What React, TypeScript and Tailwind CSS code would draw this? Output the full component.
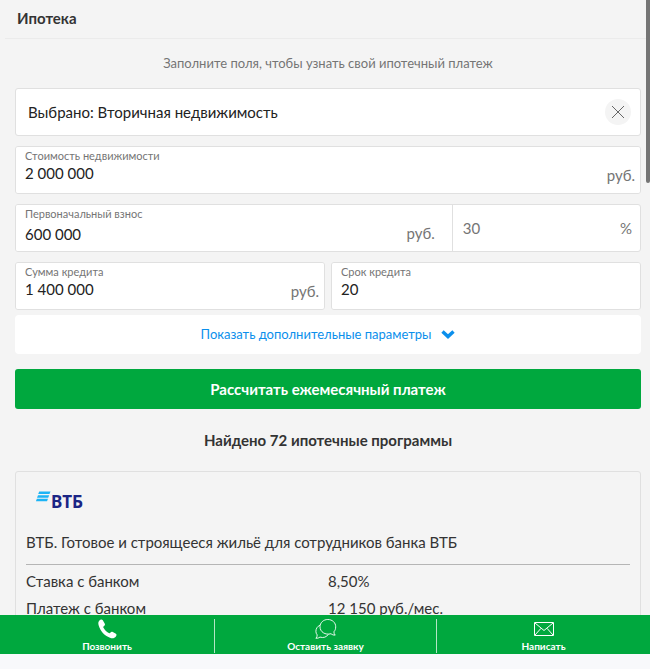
import type { ReactNode } from "react";
import { useState } from "react";

type FieldProps = {
  id: string;
  label: string;
  value: string;
  onChange: (value: string) => void;
  unit?: string;
  low?: boolean;
};

function Field({ id, label, value, onChange, unit, low }: FieldProps) {
  return (
    <div className="flex h-full min-w-0 flex-1 items-end bg-white">
      <div className="flex h-full min-w-0 flex-1 flex-col pl-[9px] pt-[2px]">
        <label htmlFor={id} className="text-[11px] leading-[14px] text-[#757575]">
          {label}
        </label>
        <input
          id={id}
          value={value}
          onChange={(e) => onChange(e.target.value)}
          className={`w-full bg-transparent text-[15px] leading-5 text-[#222] outline-none ${low ? "mt-[3px]" : ""}`}
        />
      </div>
      {unit && (
        <span className={`text-[15px] leading-5 text-[#757575] ${low ? "pb-2 pr-[17px]" : "pb-2 pr-[5px]"}`}>{unit}</span>
      )}
    </div>
  );
}

function Action({ href, label, children }: { href: string; label: string; children: ReactNode }) {
  return (
    <a href={href} className="flex flex-col items-center text-[10px] font-bold leading-[14px] text-white">
      <span className="flex h-5 items-center">{children}</span>
      {label}
    </a>
  );
}

const box = "h-12 overflow-hidden rounded-[3px] border border-[#e0e0e0] bg-white";

const program = [
  { name: "Ставка с банком", value: "8,50%" },
  { name: "Платеж с банком", value: "12 150 руб./мес." },
];

export default function App() {
  const [price, setPrice] = useState("2 000 000");
  const [deposit, setDeposit] = useState("600 000");
  const [percent, setPercent] = useState("30");
  const [amount, setAmount] = useState("1 400 000");
  const [term, setTerm] = useState("20");

  return (
    <div className="relative flex h-screen flex-col bg-[#f4f4f4] font-['Lato','Noto_Sans',sans-serif] text-[#333]">
      <div className="absolute right-0 top-0 h-[183px] w-1 rounded-b bg-[#757575]" />

      <main className="min-h-0 flex-1 overflow-hidden pl-[5px] pr-1">
        <h1 className="border-b border-[#ebebeb] pb-[9px] pl-3 pt-2 text-[15px] font-bold leading-[21px]">Ипотека</h1>

        <form className="pl-[10px] pr-[5px]" onSubmit={(e) => e.preventDefault()}>
          <p className="pb-[15px] pt-[14px] text-center text-[13px] leading-5 text-[#757575]">
            Заполните поля, чтобы узнать свой ипотечный платеж
          </p>

          <div className="flex flex-col gap-[10px]">
            <div className={`${box} flex items-center justify-between pl-3 pr-[9px] text-[15px] text-[#222]`}>
              <span>Выбрано: Вторичная недвижимость</span>
              <button type="button" aria-label="Сбросить" className="flex size-[26px] items-center justify-center rounded-full bg-[#f4f4f4]">
                <svg width="12" height="12" viewBox="0 0 12 12" stroke="#666" strokeWidth="1">
                  <path d="M0 0L12 12M12 0L0 12" />
                </svg>
              </button>
            </div>

            <div className={box}>
              <Field id="price" label="Стоимость недвижимости" value={price} onChange={setPrice} unit="руб." />
            </div>

            <div className={`${box} flex`}>
              <div className="flex w-[70%] border-r border-[#e0e0e0]">
                <Field id="deposit" label="Первоначальный взнос" value={deposit} onChange={setDeposit} unit="руб." low />
              </div>
              <div className="flex min-w-0 flex-1 items-center pl-[10px] pr-2 text-[15px] leading-5 text-[#757575]">
                <input
                  aria-label="Взнос в процентах"
                  value={percent}
                  onChange={(e) => setPercent(e.target.value)}
                  className="min-w-0 flex-1 bg-transparent outline-none"
                />
                <span>%</span>
              </div>
            </div>

            <div className="grid grid-cols-2 gap-[6px]">
              <div className={box}>
                <Field id="amount" label="Сумма кредита" value={amount} onChange={setAmount} unit="руб." />
              </div>
              <div className={box}>
                <Field id="term" label="Срок кредита" value={term} onChange={setTerm} />
              </div>
            </div>
          </div>

          <button type="button" className="mt-[5px] flex h-[39px] w-full items-center justify-center gap-[10px] rounded bg-white text-[13px] text-[#0b8fec]">
            Показать дополнительные параметры
            <svg width="14" height="9" viewBox="0 0 14 9" fill="none" stroke="#0b8fec" strokeWidth="3.4">
              <path d="M1.5 1.5L7 6.6L12.5 1.5" />
            </svg>
          </button>

          <button type="submit" className="mt-[15px] h-10 w-full rounded-[3px] bg-[#00a83e] text-[15px] font-bold text-white">
            Рассчитать ежемесячный платеж
          </button>
        </form>

        <section className="pl-[10px] pr-[5px]">
          <h2 className="pb-[21px] pt-[21px] text-center text-[15px] font-bold leading-5">Найдено 72 ипотечные программы</h2>

          <article className="rounded-[3px] border border-[#e0e0e0] px-[10px] pb-4 pt-[18px] text-[15px] leading-5">
            <svg className="ml-[10px]" width="50" height="22" viewBox="0 0 50 22" role="img" aria-label="ВТБ">
              <g fill="#1cb4f5">
                <path d="M3.2 1.5H14.5L13.5 4H2.2Z" />
                <path d="M2 5.2H13.2L12.2 7.7H1Z" />
                <path d="M.9 8.8H12L11 11.3H-.1Z" />
              </g>
              <text x="15" y="18" fill="#1b2585" fontFamily="'Noto Sans', sans-serif" fontSize="17" fontWeight="700">
                ВТБ
              </text>
            </svg>
            <h3 className="border-b border-[#b5b5b5] pb-3 pt-5">ВТБ. Готовое и строящееся жильё для сотрудников банка ВТБ</h3>
            <table className="mt-[2px] w-full table-fixed">
              <tbody>
                {program.map((row) => (
                  <tr key={row.name} className="h-[27px]">
                    <th scope="row" className="text-left font-normal">{row.name}</th>
                    <td>{row.value}</td>
                  </tr>
                ))}
              </tbody>
            </table>
          </article>
        </section>
      </main>

      <nav className="grid grid-cols-[215fr_222fr_213fr] divide-x divide-white/70 bg-[#00a83e] pb-px pt-1">
        <Action href="#call" label="Позвонить">
          <svg width="19" height="20" viewBox="0 0 19 20" fill="white">
            <path d="M1.2 1.7C2.2.6 3.9.1 4.8 1.2L6.8 4.7C7.3 5.7 6.8 6.4 5.7 7.2C5.1 7.7 5.2 8.2 5.5 8.8C6.6 11 8.4 12.9 10.8 14.1C11.4 14.4 11.8 14.3 12.3 13.7C13.1 12.6 13.8 12.4 14.8 12.9L17.9 14.7C18.8 15.3 18.6 16.5 17.9 17.4C16.6 19.2 14.4 19.7 12 18.7C6.3 16.4 2.4 12.1.7 6.4C.1 4.4.2 2.9 1.2 1.7Z" />
          </svg>
        </Action>
        <Action href="#request" label="Оставить заявку">
          <svg width="22" height="20" viewBox="0 0 22 20" fill="none" stroke="white" strokeWidth="0.9">
            <path d="M12.8.5C17.4.5 20.7 3.7 20.7 7.8C20.7 9.9 20.1 11.5 18.9 12.8C18.9 14.2 19.4 15.4 20.2 16.1C18.6 16.2 17 15.7 16 14.7C10.2 16.4 5 12.8 5 7.8C5 3.7 8.4.5 12.8.5Z" />
            <path d="M5.1 6.1C2.3 7.5.9 9.6.9 12.3C.9 13.7 1.3 14.9 2.2 15.9C2.2 17.3 1.8 18.4.9 19.3C2.5 19.4 4 18.9 5 18.1C8.4 19.2 11.6 18.1 13.3 15.4" />
          </svg>
        </Action>
        <Action href="#write" label="Написать">
          <svg width="20" height="14" viewBox="0 0 20 14" fill="none" stroke="white">
            <path d="M.5.5H19.5V13.5H.5ZM1 1L10 8.5L19 1M1 13L7 6.3M19 13L13 6.3" />
          </svg>
        </Action>
      </nav>
      <div className="h-[15px] bg-[#f8f9fb]" />
    </div>
  );
}
